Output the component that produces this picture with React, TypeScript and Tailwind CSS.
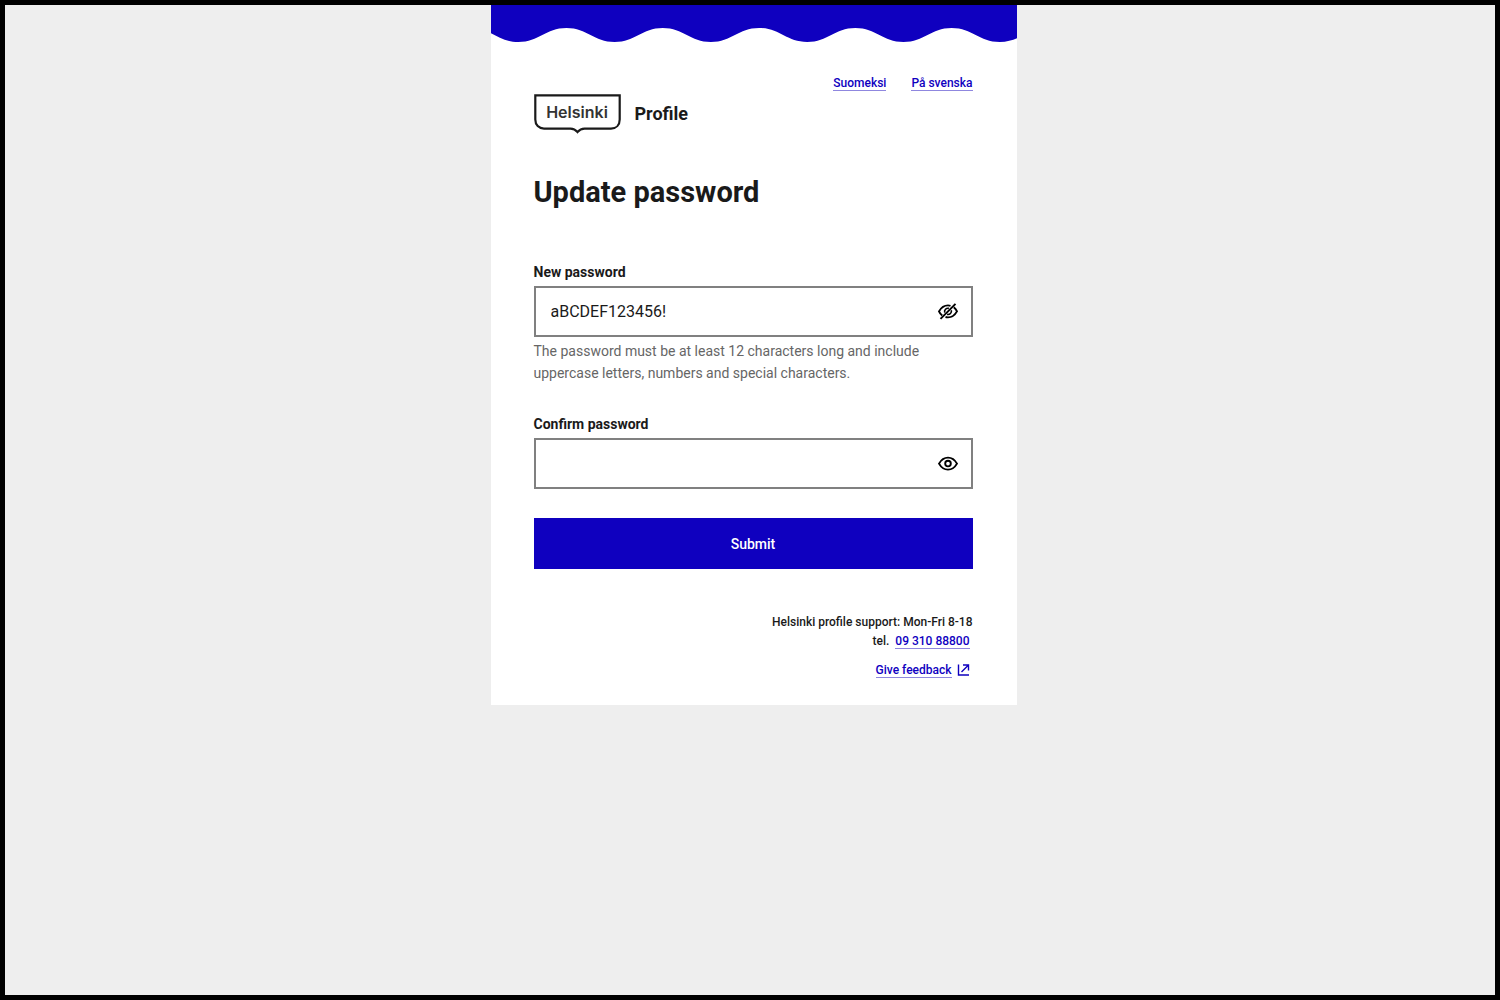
import { useState } from "react";

const PERIOD = 96.3;

function wavePath() {
  let x = 27.3 - PERIOD;
  let d = `M${x} 0V37`;
  for (let i = 0; i < 7; i++) {
    const mid = x + PERIOD / 2;
    const end = x + PERIOD;
    d += `C${x + 21} 37 ${mid - 21} 23 ${mid} 23`;
    d += `C${mid + 21} 23 ${end - 21} 37 ${end} 37`;
    x = end;
  }
  return d + "V0Z";
}

function Wave() {
  return (
    <svg className="block h-[38px] w-full" viewBox="0 0 526 38" preserveAspectRatio="none" aria-hidden="true">
      <path d={wavePath()} fill="#0f00bf" />
    </svg>
  );
}

function Logo() {
  return (
    <div className="relative flex h-10 w-[87px] justify-center pt-1.5">
      <svg className="absolute inset-0" width="87" height="40" viewBox="0 0 87 40" fill="none" stroke="#1a1a1a" strokeWidth="2.2" aria-hidden="true">
        <path d="M1.3 1.3H85.7V25.5C85.7 31 82.2 34.6 77 34.6H50.5C47.5 34.6 45.3 35.9 43.5 38C41.7 35.9 39.5 34.6 36.5 34.6H10C4.8 34.6 1.3 31 1.3 25.5Z" />
      </svg>
      <span className="relative font-['Inter'] text-base leading-6 font-semibold text-[#333333]">Helsinki</span>
    </div>
  );
}

function Eye() {
  return (
    <svg width="24" height="24" viewBox="0 0 24 24" fill="none" stroke="#000" strokeWidth="1.9" aria-hidden="true">
      <path d="M3 11.6C5.3 7.6 8.4 5.6 12 5.6C15.6 5.6 18.7 7.6 21 11.6C18.7 15.6 15.6 17.6 12 17.6C8.4 17.6 5.3 15.6 3 11.6Z" />
      <circle cx="12" cy="11.6" r="2.8" />
    </svg>
  );
}

function EyeCrossed() {
  return (
    <svg width="24" height="24" viewBox="0 0.6 24 24" fill="none" stroke="#000" strokeWidth="1.9" aria-hidden="true">
      <path d="M6.2 16.2C4.9 15.2 3.8 13.8 3 12C5.3 8 8.4 6 12 6C12.9 6 13.7 6.1 14.5 6.4" />
      <path d="M17.8 7.8C19.1 8.8 20.2 10.2 21 12C18.7 16 15.6 18 12 18C11.1 18 10.3 17.9 9.5 17.6" />
      <path d="M8.7 13.2C8 10.6 10.2 8.4 12.9 9M15.3 10.8C16 13.4 13.8 15.6 11.1 15" strokeWidth="1.6" />
      <path d="M4.5 19.5L19.5 4.5" />
    </svg>
  );
}

function External() {
  return (
    <svg width="13" height="13" viewBox="0 0 13 13" fill="none" stroke="#0f00bf" strokeWidth="1.4" aria-hidden="true">
      <path d="M1.5 0.5V11H12" />
      <path d="M4.5 8L11 1.5M6 1H11.5V6.5" />
    </svg>
  );
}

const linkClass = "border-b border-[#8f87df] text-[#0f00bf]";

type FieldProps = { id: string; label: string; initial: string; visible: boolean; hint?: string };

function PasswordField({ id, label, initial, visible, hint }: FieldProps) {
  const [value, setValue] = useState(initial);
  const [shown, setShown] = useState(visible);
  return (
    <div>
      <label htmlFor={id} className="block text-sm leading-5 font-bold">
        {label}
      </label>
      <div className="mt-1 flex h-[51px] items-center border-2 border-[#808080] pr-[11px]">
        <input
          id={id}
          type={shown ? "text" : "password"}
          value={value}
          onChange={(e) => setValue(e.target.value)}
          className="h-full min-w-0 flex-1 bg-transparent px-[15px] text-base outline-none"
        />
        <button type="button" aria-label={shown ? "Hide password" : "Show password"} onClick={() => setShown(!shown)}>
          {shown ? <EyeCrossed /> : <Eye />}
        </button>
      </div>
      {hint && <p className="mt-[3px] text-sm leading-[22px] text-[#666666]">{hint}</p>}
    </div>
  );
}

export default function App() {
  return (
    <div className="min-h-screen border-5 border-black bg-[#eeeeee] pl-[7px] font-['Roboto',sans-serif] text-[#1a1a1a]">
      <main className="mx-auto max-w-[526px] bg-white">
        <Wave />
        <div className="pt-[34px] pr-11 pb-[27px] pl-[43px]">
          <nav className="flex justify-end gap-[25px] text-xs leading-[13px] font-medium">
            <a href="#fi" className={linkClass}>Suomeksi</a>
            <a href="#sv" className={linkClass}>På svenska</a>
          </nav>
          <header className="mt-[3px] flex items-center gap-3.5">
            <Logo />
            <span className="text-lg leading-6 font-bold">Profile</span>
          </header>
          <h1 className="mt-10 text-[29px] leading-9 font-bold">Update password</h1>
          <form className="mt-[52px]" onSubmit={(e) => e.preventDefault()}>
            <PasswordField
              id="new-password"
              label="New password"
              initial="aBCDEF123456!"
              visible
              hint="The password must be at least 12 characters long and include uppercase letters, numbers and special characters."
            />
            <div className="mt-[30px]">
              <PasswordField id="confirm-password" label="Confirm password" initial="" visible={false} />
            </div>
            <button type="submit" className="mt-[29px] h-[51px] w-full bg-[#0f00bf] text-sm font-medium text-white">
              Submit
            </button>
          </form>
          <footer className="mt-11 flex flex-col items-end text-xs leading-[19px] font-medium">
            <p>Helsinki profile support: Mon-Fri 8-18</p>
            <p className="flex items-baseline gap-1.5 pr-[3px]">
              tel.
              <a href="tel:0931088800" className={`${linkClass} leading-[13px]`}>09 310 88800</a>
            </p>
            <p className="mt-3 flex h-[15px] items-center gap-[5px] pr-[3px]">
              <a href="#feedback" className={`${linkClass} leading-[13px]`}>Give feedback</a>
              <External />
            </p>
          </footer>
        </div>
      </main>
    </div>
  );
}
